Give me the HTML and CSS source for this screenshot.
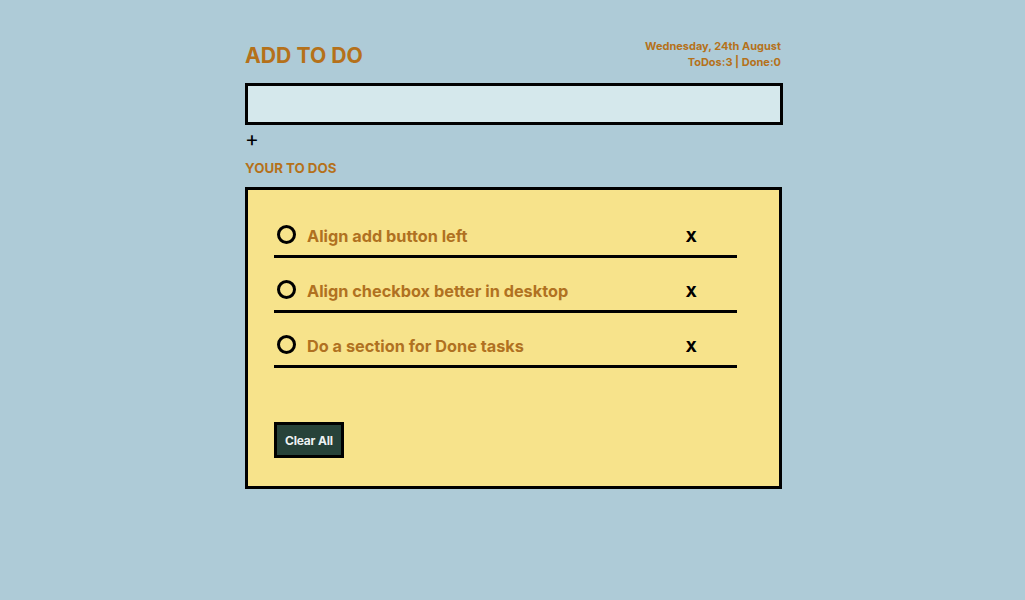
FILE: index.html
```html
<!DOCTYPE html>
<html lang="en">
<head>
<meta charset="utf-8">
<title>To Do</title>
<link rel="stylesheet" href="styles.css">
</head>
<body>
<main class="app">
  <header class="header">
    <h1 class="title">ADD TO DO</h1>
    <div class="meta">
      <div>Wednesday, 24th August</div>
      <div>ToDos:3 | Done:0</div>
    </div>
  </header>
  <input class="new-input" type="text" aria-label="New to do">
  <button class="add-btn" type="button">+</button>
  <h2 class="subtitle">YOUR TO DOS</h2>
  <section class="list-box">
    <ul class="todo-list">
      <li class="todo">
        <span class="check"></span>
        <span class="todo-text">Align add button left</span>
        <span class="remove">X</span>
      </li>
      <li class="todo">
        <span class="check"></span>
        <span class="todo-text">Align checkbox better in desktop</span>
        <span class="remove">X</span>
      </li>
      <li class="todo">
        <span class="check"></span>
        <span class="todo-text">Do a section for Done tasks</span>
        <span class="remove">X</span>
      </li>
    </ul>
    <button class="clear-btn" type="button">Clear All</button>
  </section>
</main>
</body>
</html>
```

FILE: styles.css
```css
* { box-sizing: border-box; }

html, body {
  margin: 0;
  padding: 0;
  background: #aecbd7;
  font-family: Inter, "Noto Sans", sans-serif;
}

.app {
  width: 538px;
  margin-left: calc(50% - 267.5px);
  padding-top: 38px;
  display: flex;
  flex-direction: column;
  align-items: flex-start;
}

.header {
  width: 100%;
  display: flex;
  justify-content: space-between;
  align-items: flex-start;
}

.title {
  margin: 3px 0 0;
  font-size: 21.2px;
  line-height: 28px;
  font-weight: 700;
  color: #b5711a;
}

.meta {
  text-align: right;
  font-size: 11px;
  line-height: 16px;
  font-weight: 700;
  color: #b5711a;
  padding-right: 2px;
}

.new-input {
  display: block;
  width: 100%;
  height: 42px;
  margin-top: 13px;
  border: 3px solid #000;
  background: #d5e8ec;
  outline: none;
  padding: 0 8px;
  font: inherit;
}

.add-btn {
  margin-top: 4px;
  padding: 0;
  border: none;
  background: none;
  font-family: Inter, sans-serif;
  font-size: 21px;
  line-height: 20px;
  font-weight: 400;
  color: #000;
}

.subtitle {
  margin: 11px 0 0;
  font-size: 13.3px;
  line-height: 17px;
  font-weight: 700;
  color: #b5711a;
}

.list-box {
  width: 537px;
  margin-top: 10px;
  border: 3px solid #000;
  background: #f7e38b;
  padding: 13px 42px 28px 26px;
}

.todo-list {
  list-style: none;
  margin: 0;
  padding: 0;
}

.todo {
  display: flex;
  align-items: flex-start;
  padding-top: 22px;
  height: 55px;
  border-bottom: 3px solid #000;
}

.check {
  flex: none;
  width: 19px;
  height: 19px;
  margin-left: 3px;
  border: 3px solid #000;
  border-radius: 50%;
}

.todo-text {
  flex: 1;
  margin-left: 11px;
  font-size: 16.3px;
  line-height: 22px;
  font-weight: 700;
  color: #b07121;
}

.remove {
  margin-right: 40px;
  margin-top: 1px;
  font-size: 15px;
  line-height: 22px;
  font-weight: 800;
  color: #000;
}

.clear-btn {
  margin-top: 54px;
  height: 36px;
  padding: 0 8px;
  border: 3px solid #000;
  background: #274239;
  color: #eef2f2;
  font-family: Inter, sans-serif;
  font-size: 12px;
  font-weight: 700;
  letter-spacing: -0.2px;
}
```
